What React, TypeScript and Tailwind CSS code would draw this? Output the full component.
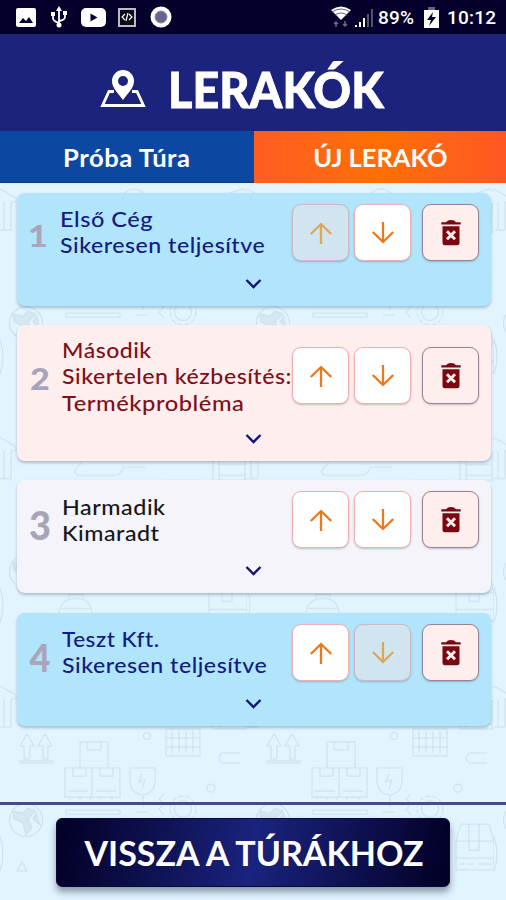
import React from "react";

type Stop = {
  id: number;
  lines: { text: string; cls: string }[];
  card: string;
  body: string;
  number: string;
  upDisabled?: boolean;
  downDisabled?: boolean;
};

const stops: Stop[] = [
  {
    id: 1,
    lines: [
      { text: "Első Cég", cls: "scale-x-[1.07]" },
      { text: "Sikeresen teljesítve", cls: "scale-x-[1.05]" },
    ],
    card: "h-[113px] bg-[#b1e5fc]",
    body: "text-[#151b80] pl-[43px] pt-[13px]",
    number: "text-[#aaa5bd] top-[23px] left-[9px] text-[31px] scale-x-[1.1]",
    upDisabled: true,
  },
  {
    id: 2,
    lines: [
      { text: "Második", cls: "scale-x-[1.045]" },
      { text: "Sikertelen kézbesítés:", cls: "scale-x-[1.05]" },
      { text: "Termékprobléma", cls: "scale-x-[1.078]" },
    ],
    card: "mt-[19px] h-[136px] bg-[#ffeeee]",
    body: "text-[#7d1018] pl-[45px] pt-[12px]",
    number: "text-[#a5a4bc] top-[34px] left-[11px] text-[31px] scale-x-[1.1]",
  },
  {
    id: 3,
    lines: [
      { text: "Harmadik", cls: "scale-x-[1.06]" },
      { text: "Kimaradt", cls: "scale-x-[1.055]" },
    ],
    card: "mt-[19px] h-[113px] bg-[#f4f4fa]",
    body: "text-[#17171b] pl-[45px] pt-[14px]",
    number: "text-[#a7a6b8] top-[26px] left-[11px] text-[40px] scale-x-[0.95]",
  },
  {
    id: 4,
    lines: [
      { text: "Teszt Kft.", cls: "scale-x-[1.025]" },
      { text: "Sikeresen teljesítve", cls: "scale-x-[1.05]" },
    ],
    card: "mt-[20px] h-[113px] bg-[#b1e5fc]",
    body: "text-[#151b80] pl-[45px] pt-[13px]",
    number: "text-[#aaa5bd] top-[25px] left-[11px] text-[38px] scale-x-[0.95]",
    downDisabled: true,
  },
];

const housePath =
  "M209 -14l33-11 5 2M0 -25l16 9v4h-5v28H0M213 -14v32h34M219 18V-10h28M245 -10v28M219 -4h26M219 2h26M219 13h26M4 -12v28";

function Backdrop() {
  return (
    <svg className="absolute inset-0 h-full w-full" aria-hidden="true">
      <defs>
        <pattern id="cargo" width="247" height="248.5" patternUnits="userSpaceOnUse" y="31">
          <g fill="none" stroke="#cddfe9" strokeWidth="1">
            {/* house, drawn across the tile's seam */}
            <path d={housePath} />
            <path d={housePath} transform="translate(0 248.500)" />
            {/* arrows */}
            <path d="M20 35l7-12 7 12h-4v10q0 4-4 3h-2v-13zM38 35l7-12 7 12h-4v13h-5v-13zM20 50h33v2H20z" />
            {/* stacked boxes */}
            <path d="M80 57V31h28v26M65 57h55v29H65zM92 57v29M87 31v8h14v-8M73 57v8h13v-8M100 57v8h13v-8M68 80h20M96 80h20M70 86v3M80 86v3M90 86v3M100 86v3M112 86v3" />
            {/* fragile shield */}
            <path d="M130 57h25v12q0 13-12 15-13-2-13-15zM143 84v12M142 62l-3 9 6-2-3 9" />
            <circle cx="147" cy="25" r="3.5" />
            {/* shelves */}
            <path d="M166 18h34v27h-34zM166 27h34M166 36h34M172 20v22M179 20v22M186 20v22M193 20v22" />
            <path d="M240 42h-18q-6 5 0 10h18" />
            <circle cx="211" cy="77" r="4" />
            {/* globe */}
            <circle cx="26" cy="109" r="16.5" />
            <path fill="#d5e7f0" d="M13 100l10 2 5-5 8 3-8 8 4 8-6 8-3-12-9-4zM37 101l-4 7 8 7" />
            {/* gear */}
            <circle cx="183" cy="98" r="13" strokeDasharray="5 2" />
            <circle cx="183" cy="98" r="8.500" />
            <path d="M164 83l-5 5 5 5-5 5 5 6M66 99h54v4H66zM136 101h12" />
            {/* parcel */}
            <path d="M209 130l5-17h28l5 17v29h-38zM209 130h38M222 113v26h10v-26M209 147h38M212 153h6M221 153h6M232 153h12" />
            <path d="M0 125q6 18 0 35M17 160l5-9 5 9z" />
            {/* courier */}
            <path d="M59 149q3-13 17-13t16 13l-3 7H62zM61 146h30M69 136v-4h14v4" />
            {/* vehicle */}
            <path d="M82 0q-12 10-4 13h35q8 0 10-8h22M124 228q10-9 20 0v20" />
          </g>
        </pattern>
      </defs>
      <rect width="100%" height="100%" fill="url(#cargo)" />
    </svg>
  );
}

function Arrow({ down }: { down?: boolean }) {
  return (
    <svg width="24" height="24" viewBox="0 0 24 24" fill="none" stroke="currentColor" strokeWidth="2.3">
      <path d={down ? "M12 1v20M1.800 11L12 21l10.200-10" : "M12 23V3M1.800 13L12 3l10.200 10"} />
    </svg>
  );
}

function Trash() {
  return (
    <svg width="20" height="26" viewBox="0 0 20 26">
      <path fill="#7b0710" d="M.3 2.200h4.700Q6.500 0 10 0t5 2.200h4.700v2.300H.3zM1.500 6.300h17v16.500q0 2.500-2.500 2.500H4q-2.500 0-2.500-2.500z" />
      <path d="M6 11.200l8 8M14 11.200l-8 8" stroke="#ffeeee" strokeWidth="2.900" />
    </svg>
  );
}

const square = "flex h-[57px] w-[57px] items-center justify-center rounded-[9px] border shadow-[0_1px_2px_rgba(60,70,90,0.3)]";
const enabled = "border-[#f0b0b0] bg-white text-[#ee771c]";
const disabled = "border-[#ccb9c3] bg-[#d0e5ef] text-[#dfa656]";

function StopCard({ stop }: { stop: Stop }) {
  return (
    <section className={`relative w-[474px] rounded-[8px] shadow-[0_2px_3px_rgba(70,90,110,0.35)] ${stop.card}`}>
      <span className={`absolute flex w-[24px] justify-center font-[Lato,sans-serif] leading-[38px] font-black ${stop.number}`}>
        {stop.id}
      </span>
      <div className={`font-[Lato,sans-serif] text-[22px] leading-[26.300px] font-medium tracking-[0.500px] whitespace-nowrap ${stop.body}`}>
        {stop.lines.map((l) => (
          <p key={l.text} className={`w-max origin-left ${l.cls}`}>
            {l.text}
          </p>
        ))}
      </div>
      <div className={`absolute left-[275px] flex ${stop.id === 2 ? "top-[22px]" : "top-[11px]"}`}>
        <button className={`${square} ${stop.upDisabled ? disabled : enabled}`}>
          <Arrow />
        </button>
        <button className={`ml-[5px] ${square} ${stop.downDisabled ? disabled : enabled}`}>
          <Arrow down />
        </button>
        <button className={`ml-[11px] ${square} border-[#9b8291] bg-[#ffeeee]`}>
          <Trash />
        </button>
      </div>
      <svg className="absolute bottom-[16px] left-[228px]" width="17" height="12" viewBox="0 0 17 12" fill="none">
        <path d="M1.500 2l7 7 7-7" stroke="#11127a" strokeWidth="2.400" />
      </svg>
    </section>
  );
}

function StatusBar() {
  return (
    <div className="flex h-[34px] items-center bg-[#03012b] text-white">
      <svg width="180" height="34" viewBox="0 0 180 34" fill="white">
        <rect x="16" y="8" width="20" height="19" rx="2" />
        <path d="M19 23l4-5 3 3 3-4 4 6z" fill="#03012b" />
        <path d="M59 10v15M53 14v4q0 3 6 5M65 13v4q0 3-6 4" fill="none" stroke="white" strokeWidth="1.800" />
        <path d="M59 6l3 5h-6zM51 12h4v4h-4zM63 11h4v4h-4z" />
        <circle cx="59" cy="25" r="2.500" />
        <rect x="81" y="8" width="25" height="19" rx="5" />
        <path d="M90.500 13.500l7 4-7 4z" fill="#03012b" />
        <rect x="119" y="9" width="16" height="17" fill="#090817" stroke="#bbbac6" strokeWidth="2" />
        <path d="M125 14l-3 3 3 3M129 14l3 3-3 3M128 13l-2 8" fill="none" stroke="white" strokeWidth="1.200" />
        <circle cx="161" cy="17" r="10.500" />
        <circle cx="161" cy="17" r="6" fill="#69658c" stroke="#8e8ba7" />
      </svg>
      <svg className="ml-[148px]" width="47" height="34" viewBox="328 0 47 34">
        <path d="M331 10q10-7 20 0l-10 10z" fill="white" />
        <path d="M332 12q9-6 18 0M335 15q6-4 12 0" fill="none" stroke="#65647b" />
        <path d="M336 27v-5m-2 2l2-2 2 2M345 21v5m-2-2l2 2 2-2" fill="none" stroke="#68677b" strokeWidth="1.500" />
        <path d="M355 27v-2h2v2zM359 27v-5h2v5zM363 27v-9h2v9z" fill="white" />
        <path d="M367 27v-13h2v13zM371 27V9h2v18z" fill="#55536b" />
      </svg>
      <span className="mt-[3px] ml-[3px] w-[38px] font-[Roboto,sans-serif] text-[19px] font-medium tracking-[0.200px] whitespace-nowrap">89%</span>
      <svg className="ml-[8px]" width="15" height="34" viewBox="0 0 15 34">
        <path d="M4 7h7v3H4z" fill="#67657c" />
        <path d="M0 10h15v18H0z" fill="white" />
        <path d="M9 12l-6 8h4l-2 6 7-9H8z" fill="#03012b" />
      </svg>
      <span className="mt-[3px] ml-[8px] font-[Roboto,sans-serif] text-[19px] font-medium tracking-[0.200px] whitespace-nowrap">10:12</span>
    </div>
  );
}

export default function App() {
  return (
    <div className="flex h-[900px] w-[506px] flex-col overflow-hidden bg-[#e1f4ff]">
      <StatusBar />
      <header className="flex h-[97px] bg-[#1c237c] text-white">
        <svg className="mt-[35px] ml-[100px] shrink-0" width="46" height="39" viewBox="0 0 46 39">
          <path d="M14 22.500H9L2.500 36.500h41L37 22.500h-5" fill="none" stroke="white" strokeWidth="2.800" />
          <path fillRule="evenodd" fill="white" d="M23 1a11 11 0 0 0-11 11c0 7 6 12 11 19 5-7 11-12 11-19A11 11 0 0 0 23 1zm0 6a5 5 0 1 1 0 10 5 5 0 0 1 0-10z" />
        </svg>
        <h1 className="mt-[25px] ml-[22px] origin-left scale-x-[0.935] font-[Lato,sans-serif] text-[50px] leading-[60px] font-black whitespace-nowrap [-webkit-text-stroke:0.800px_white]">LERAKÓK</h1>
      </header>
      <nav className="flex h-[52px] shrink-0 text-white">
        <div className="flex w-[254px] items-center justify-center border-b border-[#0c388a] bg-[#0c48a2] font-[Lato,sans-serif] text-[24px] font-bold">
          <span className="mt-[2px] scale-x-[1.065] tracking-[0.500px]">Próba Túra</span>
        </div>
        <div className="flex flex-1 items-center justify-center bg-linear-to-r from-[#ff5c22] via-[#ff6f00] to-[#ff5722] font-[Lato,sans-serif] text-[24px] font-bold">
          <span className="mt-[2px] scale-x-[1.06]">ÚJ LERAKÓ</span>
        </div>
      </nav>
      <div className="relative flex flex-1 flex-col">
        <Backdrop />
        <main className="relative h-[619px] pt-[10px] pl-[17px]">
          {stops.map((s) => (
            <StopCard key={s.id} stop={s} />
          ))}
        </main>
        <footer className="relative flex flex-1 justify-center border-t-[3px] border-[#474b8b] pt-[13px]">
          <button className="flex h-[69px] w-[394px] items-center justify-center rounded-[6px] border border-[#08083a] bg-[linear-gradient(100deg,#030128_2%,#1a237e_50%,#030128_98%)] font-[Lato,sans-serif] text-[34px] font-bold whitespace-nowrap text-white shadow-[0_5px_7px_rgba(50,65,80,0.5)]">
            <span className="ml-[2px]">VISSZA A TÚRÁKHOZ</span>
          </button>
        </footer>
      </div>
    </div>
  );
}
